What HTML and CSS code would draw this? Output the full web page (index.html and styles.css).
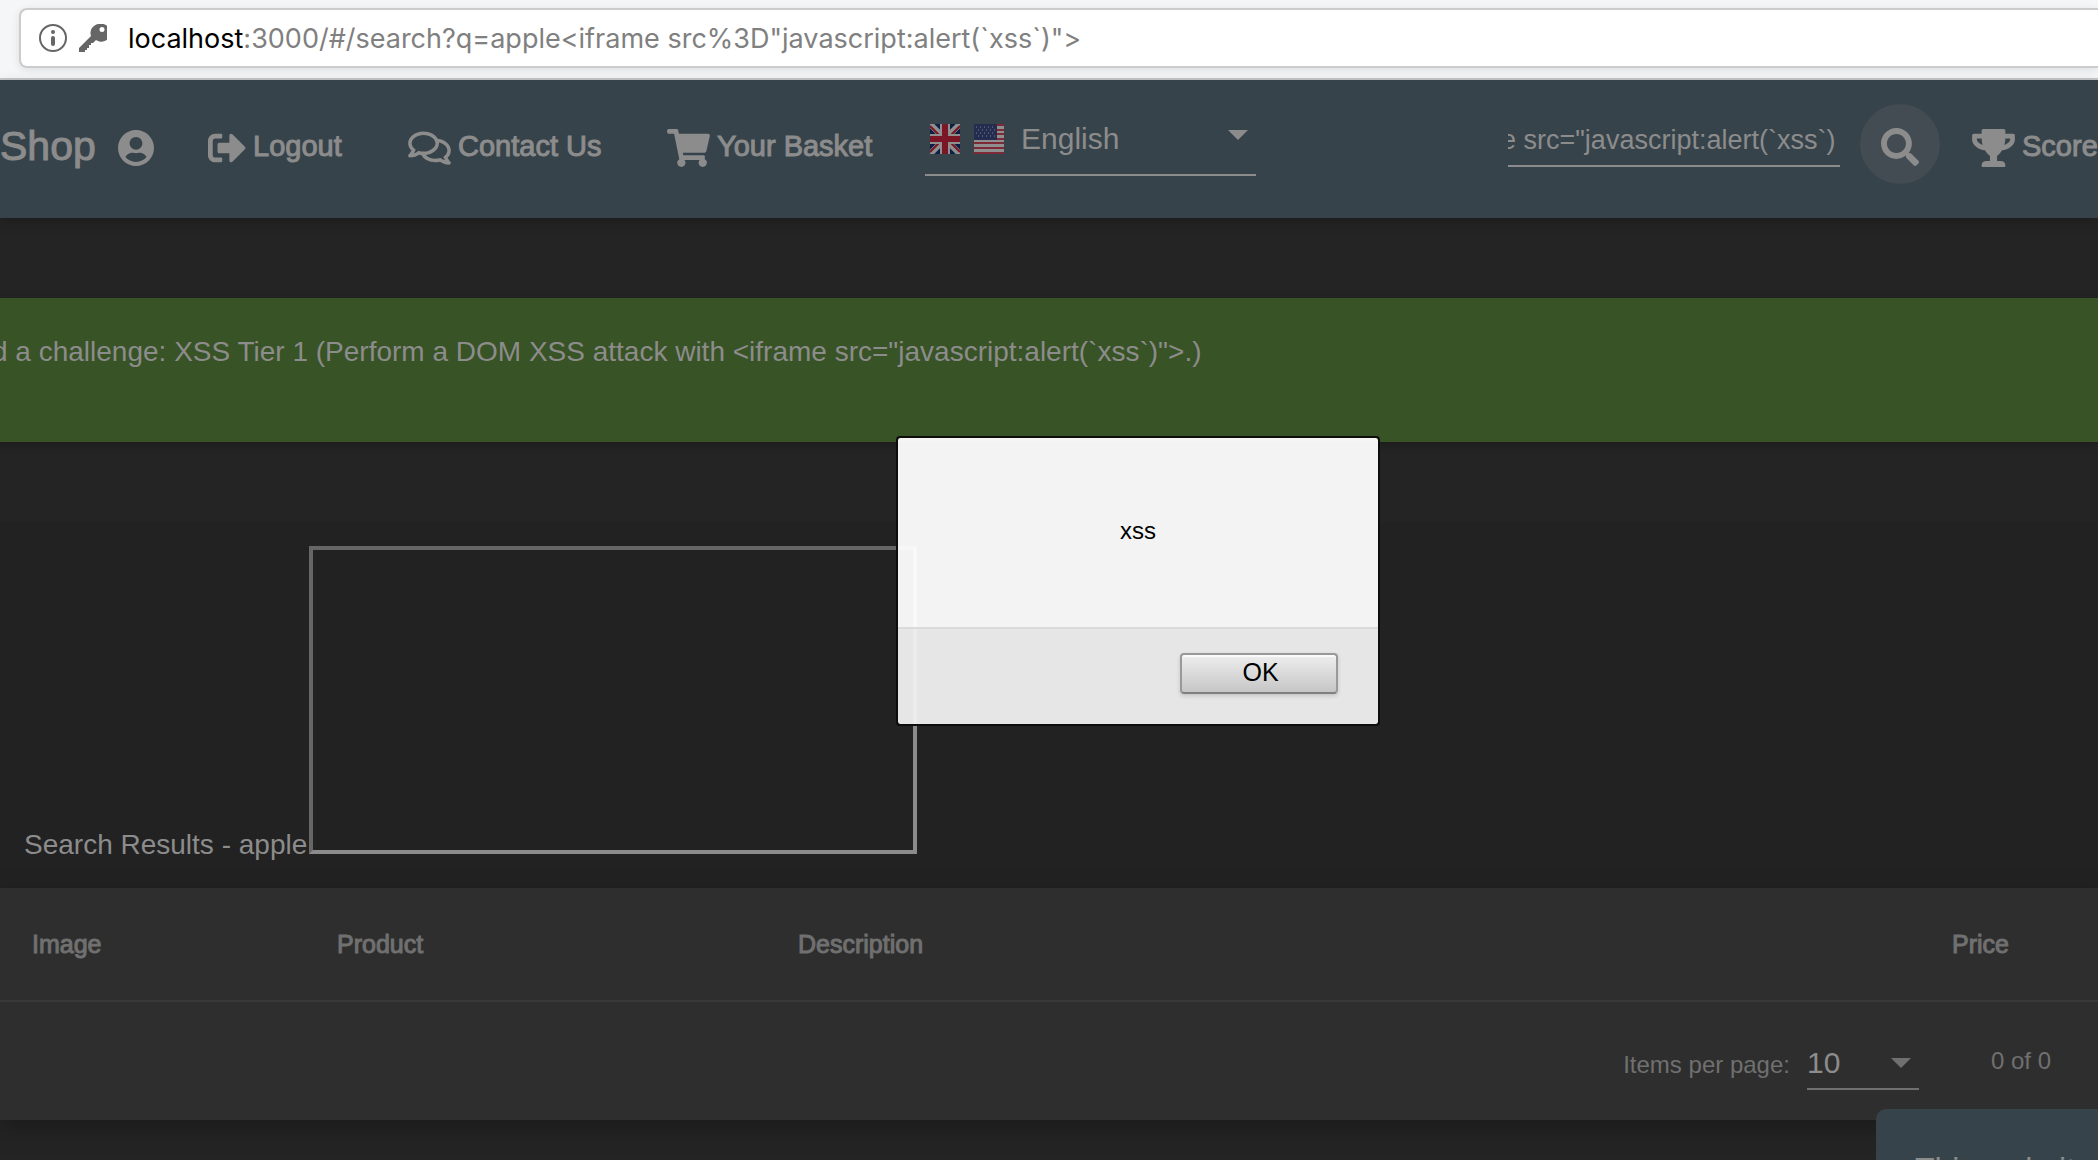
FILE: index.html
```html
<!DOCTYPE html>
<html lang="en">
<head>
<meta charset="utf-8">
<title>Juice Shop</title>
<link rel="stylesheet" href="styles.css">
</head>
<body>
<div class="browser-bar">
  <div class="address">
    <svg class="info-icon" viewBox="0 0 28 28" aria-hidden="true"><circle cx="14" cy="14" r="13" fill="none" stroke="currentColor" stroke-width="2"/><circle cx="14" cy="8" r="2" fill="currentColor"/><rect x="12" y="12" width="4" height="10" rx="2" fill="currentColor"/></svg>
    <svg class="key-icon" viewBox="0 0 28 28" aria-hidden="true"><path fill="currentColor" fill-rule="evenodd" d="M20 0a9 9 0 0 0-8 12L0 24v4h6v-2h2v-2h2v-3h2v-2h2l3-3a9 9 0 1 0 3-16zm3 3a2 2 0 1 1 0 5 2 2 0 0 1 0-5z"/></svg>
    <span class="url"><b>localhost</b>:3000/#/search?q=apple&lt;iframe src%3D"javascript:alert(`xss`)"&gt;</span>
  </div>
</div>

<header class="toolbar">
  <a class="brand" href="#/">Shop</a>
  <button class="account" aria-label="Account"><svg viewBox="0 0 496 512"><path d="M248 8C111 8 0 119 0 256s111 248 248 248 248-111 248-248S385 8 248 8zm0 96c48.600 0 88 39.400 88 88s-39.400 88-88 88-88-39.400-88-88 39.400-88 88-88zm0 344c-58.700 0-111.300-26.600-146.500-68.200 18.800-35.400 55.600-59.800 98.500-59.800 2.400 0 4.800.4 7.100 1.100 13 4.200 26.600 6.900 40.900 6.900 14.300 0 28-2.700 40.900-6.900 2.300-.7 4.700-1.100 7.100-1.100 42.900 0 79.700 24.400 98.500 59.800C359.300 421.400 306.700 448 248 448z"/></svg></button>
  <a class="nav logout" href="#/logout"><svg viewBox="0 0 512 512"><path d="M497 273L329 441c-15 15-41 4.500-41-17v-96H152c-13.300 0-24-10.700-24-24v-96c0-13.300 10.700-24 24-24h136V88c0-21.400 25.900-32 41-17l168 168c9.300 9.400 9.300 24.600 0 34zM192 436v-40c0-6.600-5.400-12-12-12H96c-17.700 0-32-14.300-32-32V160c0-17.700 14.300-32 32-32h84c6.600 0 12-5.400 12-12V76c0-6.600-5.400-12-12-12H96c-53 0-96 43-96 96v192c0 53 43 96 96 96h84c6.600 0 12-5.400 12-12z"/></svg>Logout</a>
  <a class="nav contact" href="#/contact"><svg class="wide" viewBox="0 0 576 512"><path d="M532 386.200c27.500-27.100 44-61.100 44-98.200 0-80-76.500-146.100-176.200-157.900C368.300 72.500 294.300 32 208 32 93.100 32 0 103.600 0 192c0 37 16.500 71 44 98.200-15.300 30.700-37.300 54.500-37.700 54.900-6.300 6.700-8.100 16.500-4.400 25 3.600 8.500 12 14 21.200 14 53.500 0 96.700-20.200 125.200-38.800 9.200 2.100 18.700 3.700 28.400 4.900C208.100 407.600 281.800 448 368 448c20.800 0 40.800-2.400 59.800-6.800C456.300 459.700 499.400 480 553 480c9.200 0 17.500-5.500 21.200-14 3.600-8.500 1.900-18.300-4.400-25-.4-.3-22.500-24.100-37.800-54.800zm-392.800-92.300L122.100 305c-14.100 9.100-28.500 16.300-43.100 21.400 2.700-4.700 5.400-9.700 8-14.800l15.500-31.100L77.700 256C64.200 242.600 48 220.700 48 192c0-60.700 73.300-112 160-112s160 51.300 160 112-73.300 112-160 112c-16.500 0-33-1.900-49-5.600l-19.800-4.500zM498.300 352l-24.700 24.400 15.500 31.100c2.600 5.100 5.300 10.100 8 14.800-14.600-5.100-29-12.300-43.100-21.400l-17.100-11.100-19.900 4.600c-16 3.700-32.500 5.600-49 5.600-54 0-102.200-20.100-131.300-49.700C338 339.500 416 272.900 416 192c0-3.400-.4-6.700-.7-10C479.700 196.500 528 238.800 528 288c0 28.700-16.200 50.600-29.700 64z"/></svg>Contact Us</a>
  <a class="nav basket" href="#/basket"><svg class="wide" viewBox="0 0 576 512"><path d="M528.120 301.319l47.273-208C578.806 78.301 567.391 64 551.990 64H159.208l-9.166-44.810C147.758 8.021 137.930 0 126.529 0H24C10.745 0 0 10.745 0 24v16c0 13.255 10.745 24 24 24h69.883l70.248 343.435C147.325 417.100 136 435.222 136 456c0 30.928 25.072 56 56 56s56-25.072 56-56c0-15.674-6.447-29.835-16.824-40h209.647C430.447 426.165 424 440.326 424 456c0 30.928 25.072 56 56 56s56-25.072 56-56c0-22.172-12.888-41.332-31.579-50.405l5.517-24.276c3.413-15.018-8.002-29.319-23.403-29.319H218.117l-6.545-32h293.145c11.206 0 20.920-7.754 23.403-18.681z"/></svg>Your Basket</a>
  <div class="language">
    <svg class="flag" viewBox="0 0 30 30" aria-hidden="true"><rect width="30" height="30" fill="#0c1f45"/><path d="M0 0l30 30M30 0L0 30" stroke="#8f8f8f" stroke-width="6"/><path d="M0 2l13 13M30 2L17 15M0 28l13-13M30 28L17 15" stroke="#7a1626" stroke-width="2"/><path d="M15 0v30M0 15h30" stroke="#8f8f8f" stroke-width="10"/><path d="M15 0v30M0 15h30" stroke="#7a1626" stroke-width="6"/></svg>
    <svg class="flag" viewBox="0 0 30 30" aria-hidden="true"><rect width="30" height="30" fill="#8f8f8f"/><path d="M0 1h30M0 6h30M0 10h30M0 15h30M0 19h30M0 24h30M0 29h30" stroke="#7d2a36" stroke-width="2"/><rect width="23" height="16" fill="#242c4f"/><path d="M2 3h20M4 6h18M2 9h20M4 12h18" stroke="#80838f" stroke-width="1" stroke-dasharray="1 3"/></svg>
    <select aria-label="Language"><option>English</option></select>
    <svg class="arrow" viewBox="0 0 20 10" aria-hidden="true"><path d="M0 0h20L10 10z"/></svg>
  </div>
  <input class="search-text" type="text" aria-label="Search" value="e src=&quot;javascript:alert(`xss`)">
  <button class="search-button" aria-label="Search"><svg viewBox="0 0 512 512"><path d="M505 442.700L405.300 343c-4.500-4.500-10.600-7-17-7H372c27.600-35.300 44-79.700 44-128C416 93.100 322.900 0 208 0S0 93.100 0 208s93.100 208 208 208c48.300 0 92.700-16.400 128-44v16.300c0 6.400 2.500 12.500 7 17l99.700 99.700c9.400 9.400 24.600 9.400 33.900 0l28.300-28.300c9.400-9.400 9.400-24.600.1-34zM208 336c-70.700 0-128-57.200-128-128 0-70.700 57.200-128 128-128 70.700 0 128 57.200 128 128 0 70.700-57.200 128-128 128z"/></svg></button>
  <a class="nav score" href="#/score-board"><svg class="wide" viewBox="0 0 576 512"><path d="M552 64H448V24c0-13.300-10.700-24-24-24H152c-13.300 0-24 10.700-24 24v40H24C10.700 64 0 74.700 0 88v56c0 35.700 22.500 72.400 61.900 100.700 31.500 22.700 69.800 37.100 110 41.700C203.300 338.500 240 360 240 360v72h-48c-35.300 0-64 20.700-64 56v12c0 6.600 5.400 12 12 12h296c6.600 0 12-5.400 12-12v-12c0-35.300-28.700-56-64-56h-48v-72s36.700-21.500 68.100-73.600c40.300-4.600 78.600-19 110-41.700 39.300-28.300 61.900-65 61.900-100.700V88c0-13.300-10.700-24-24-24zM99.300 192.800C74.900 175.200 64 155.600 64 144v-16h64.200c1 32.600 5.800 61.200 12.800 86.200-15.100-5.200-29.200-12.400-41.700-21.400zM512 144c0 16.100-17.700 36.100-35.300 48.800-12.500 9-26.700 16.200-41.800 21.400 7-25 11.800-53.600 12.800-86.200H512v16z"/></svg>Score</a>
</header>

<main>
  <p class="notice">d a challenge: XSS Tier 1 (Perform a DOM XSS attack with &lt;iframe src="javascript:alert(`xss`)"&gt;.)</p>
  <section class="results">
    <h1>Search Results - apple<span class="frame"></span></h1>
    <div class="card">
      <table>
        <thead><tr><th class="image">Image</th><th class="product">Product</th><th>Description</th><th class="price">Price</th></tr></thead>
      </table>
      <div class="paginator">
        <label for="size">Items per page:</label>
        <div class="page-size"><select id="size"><option>10</option></select><svg class="arrow" viewBox="0 0 20 10" aria-hidden="true"><path d="M0 0h20L10 10z"/></svg></div>
        <span class="range">0 of 0</span>
      </div>
    </div>
  </section>
</main>

<aside class="cookies">This websit</aside>

<div class="dialog" role="alertdialog" aria-label="xss">
  <p>xss</p>
  <div class="actions"><button>OK</button></div>
</div>
</body>
</html>
```
FILE: styles.css
```css
* { box-sizing: border-box; }
html { height: 100%; overflow: hidden; }
body {
  position: relative;
  min-height: 100%;
  margin: 0;
  overflow: hidden;
  background: #242424;
  color: #8c8c8c;
  font: 28px/32px "Liberation Sans", Arial, sans-serif;
}
svg { display: block; flex: none; fill: currentColor; }
a { color: inherit; text-decoration: none; }
button, input, select { margin: 0; padding: 0; border: 0; background: none; color: inherit; font: inherit; }
select { appearance: none; outline: 0; }
p, h1 { margin: 0; font-weight: 400; }

.browser-bar { height: 80px; padding: 8px 0 10px 19px; border-bottom: 2px solid #c5c7c9; background: #f5f6f8; }
.address {
  display: flex;
  align-items: center;
  height: 60px;
  padding-left: 18px;
  border: 2px solid #ccc;
  border-right: 0;
  border-radius: 8px 0 0 8px;
  background: #fff;
  box-shadow: 0 2px 8px #0000001a;
}
.address svg { width: 28px; height: 28px; color: #666; }
.info-icon { margin-right: 12px; }
.url { margin-left: 21px; padding-top: 2px; color: #808080; font: 27px/32px Inter, sans-serif; white-space: nowrap; }
.url b { color: #000; font-weight: 400; }

.toolbar { display: flex; align-items: center; height: 138px; padding-bottom: 6px; overflow: hidden; background: #37434a; box-shadow: 0 4px 12px #00000033; white-space: nowrap; }
.brand { width: 118px; font-size: 41px; line-height: 48px; -webkit-text-stroke: 1px; }
.account { margin-right: 54px; }
.account svg { width: 36px; height: 38px; margin-top: 3px; }
.nav { display: flex; align-items: center; gap: 7px; font-size: 29px; -webkit-text-stroke: 1px; }
.nav svg { width: 38px; height: 38px; margin-top: 3px; }
.nav svg.wide { width: 43px; }
.logout { width: 200px; }
.contact { width: 259px; }
.basket { width: 258px; }
.language { display: flex; align-items: center; gap: 14px; width: 331px; height: 72px; margin-bottom: 12px; padding: 0 8px 0 5px; border-bottom: 2px solid #8c8c8c; font-size: 30px; }
.flag { width: 30px; height: 30px; }
.language select { flex: 1; padding-left: 3px; }
.arrow { width: 20px; height: 10px; }
.language .arrow { margin-bottom: 8px; }
.search-text { width: 332px; height: 52px; margin: 0 20px 10px auto; border-bottom: 2px solid #8c8c8c; font-size: 27px; text-indent: -7px; }
.search-button { display: grid; place-items: center; width: 80px; height: 80px; margin: 0 32px 4px 0; border-radius: 50%; background: #424c52; }
.search-button svg { width: 38px; height: 38px; margin-top: 6px; }
.score { width: 126px; }

.notice { height: 144px; margin-top: 80px; margin-left: -8px; padding-top: 38px; background: #385325; box-shadow: 0 2px 8px #00000040; white-space: nowrap; }

.results { margin-top: 80px; padding-top: 24px; background: #222; }
.results h1 { height: 342px; padding-left: 24px; font-size: 28px; line-height: 32px; }
.frame { display: inline-block; width: 608px; height: 308px; margin-left: 2px; border: 4px solid; border-color: #666 #8b8b8b #8b8b8b #666; }
.card { height: 232px; background: #2e2e2e; box-shadow: 0 8px 24px #00000040; }
table { width: 100%; border-collapse: collapse; table-layout: fixed; }
th { height: 113px; padding: 0; border-bottom: 2px solid #393939; color: #707070; font-size: 25px; font-weight: 400; text-align: left; -webkit-text-stroke: 1px; }
.image { width: 337px; padding-left: 32px; }
.product { width: 461px; }
.price { width: 146px; }
.paginator { display: flex; align-items: center; justify-content: flex-end; height: 118px; padding-right: 47px; color: #707070; font-size: 24px; }
.paginator label { padding-top: 8px; }
.page-size { display: flex; align-items: center; width: 112px; height: 52px; margin: 6px 72px 0 17px; padding-right: 8px; border-bottom: 2px solid #707070; }
.page-size select { flex: 1; min-width: 0; color: #8c8c8c; font-size: 30px; }

.cookies { position: absolute; top: 1109px; right: 0; width: 222px; height: 51px; padding: 36px 0 0 39px; overflow: hidden; border-radius: 10px 0 0; background: #37434a; font-size: 32px; line-height: 48px; white-space: nowrap; }

.dialog { position: absolute; top: 436px; left: 896px; width: 484px; border: 2px solid #0d0d0d; border-radius: 4px; background: #fffffff2; background-clip: padding-box; color: #000; font-size: 24px; text-align: center; }
.dialog p { padding: 77px 0 80px; }
.actions { display: flex; justify-content: flex-end; height: 97px; padding: 24px 40px 0; border-top: 2px solid #dadada; background: #0000000d; }
.actions button { width: 158px; height: 41px; padding: 0 0 4px 3px; border: 2px solid #999; border-bottom-color: #808080; border-radius: 4px; background: linear-gradient(#eee, #c6c6c6); box-shadow: 0 2px 4px #00000026, inset 0 2px #fafafa; font-size: 25px; }
```
